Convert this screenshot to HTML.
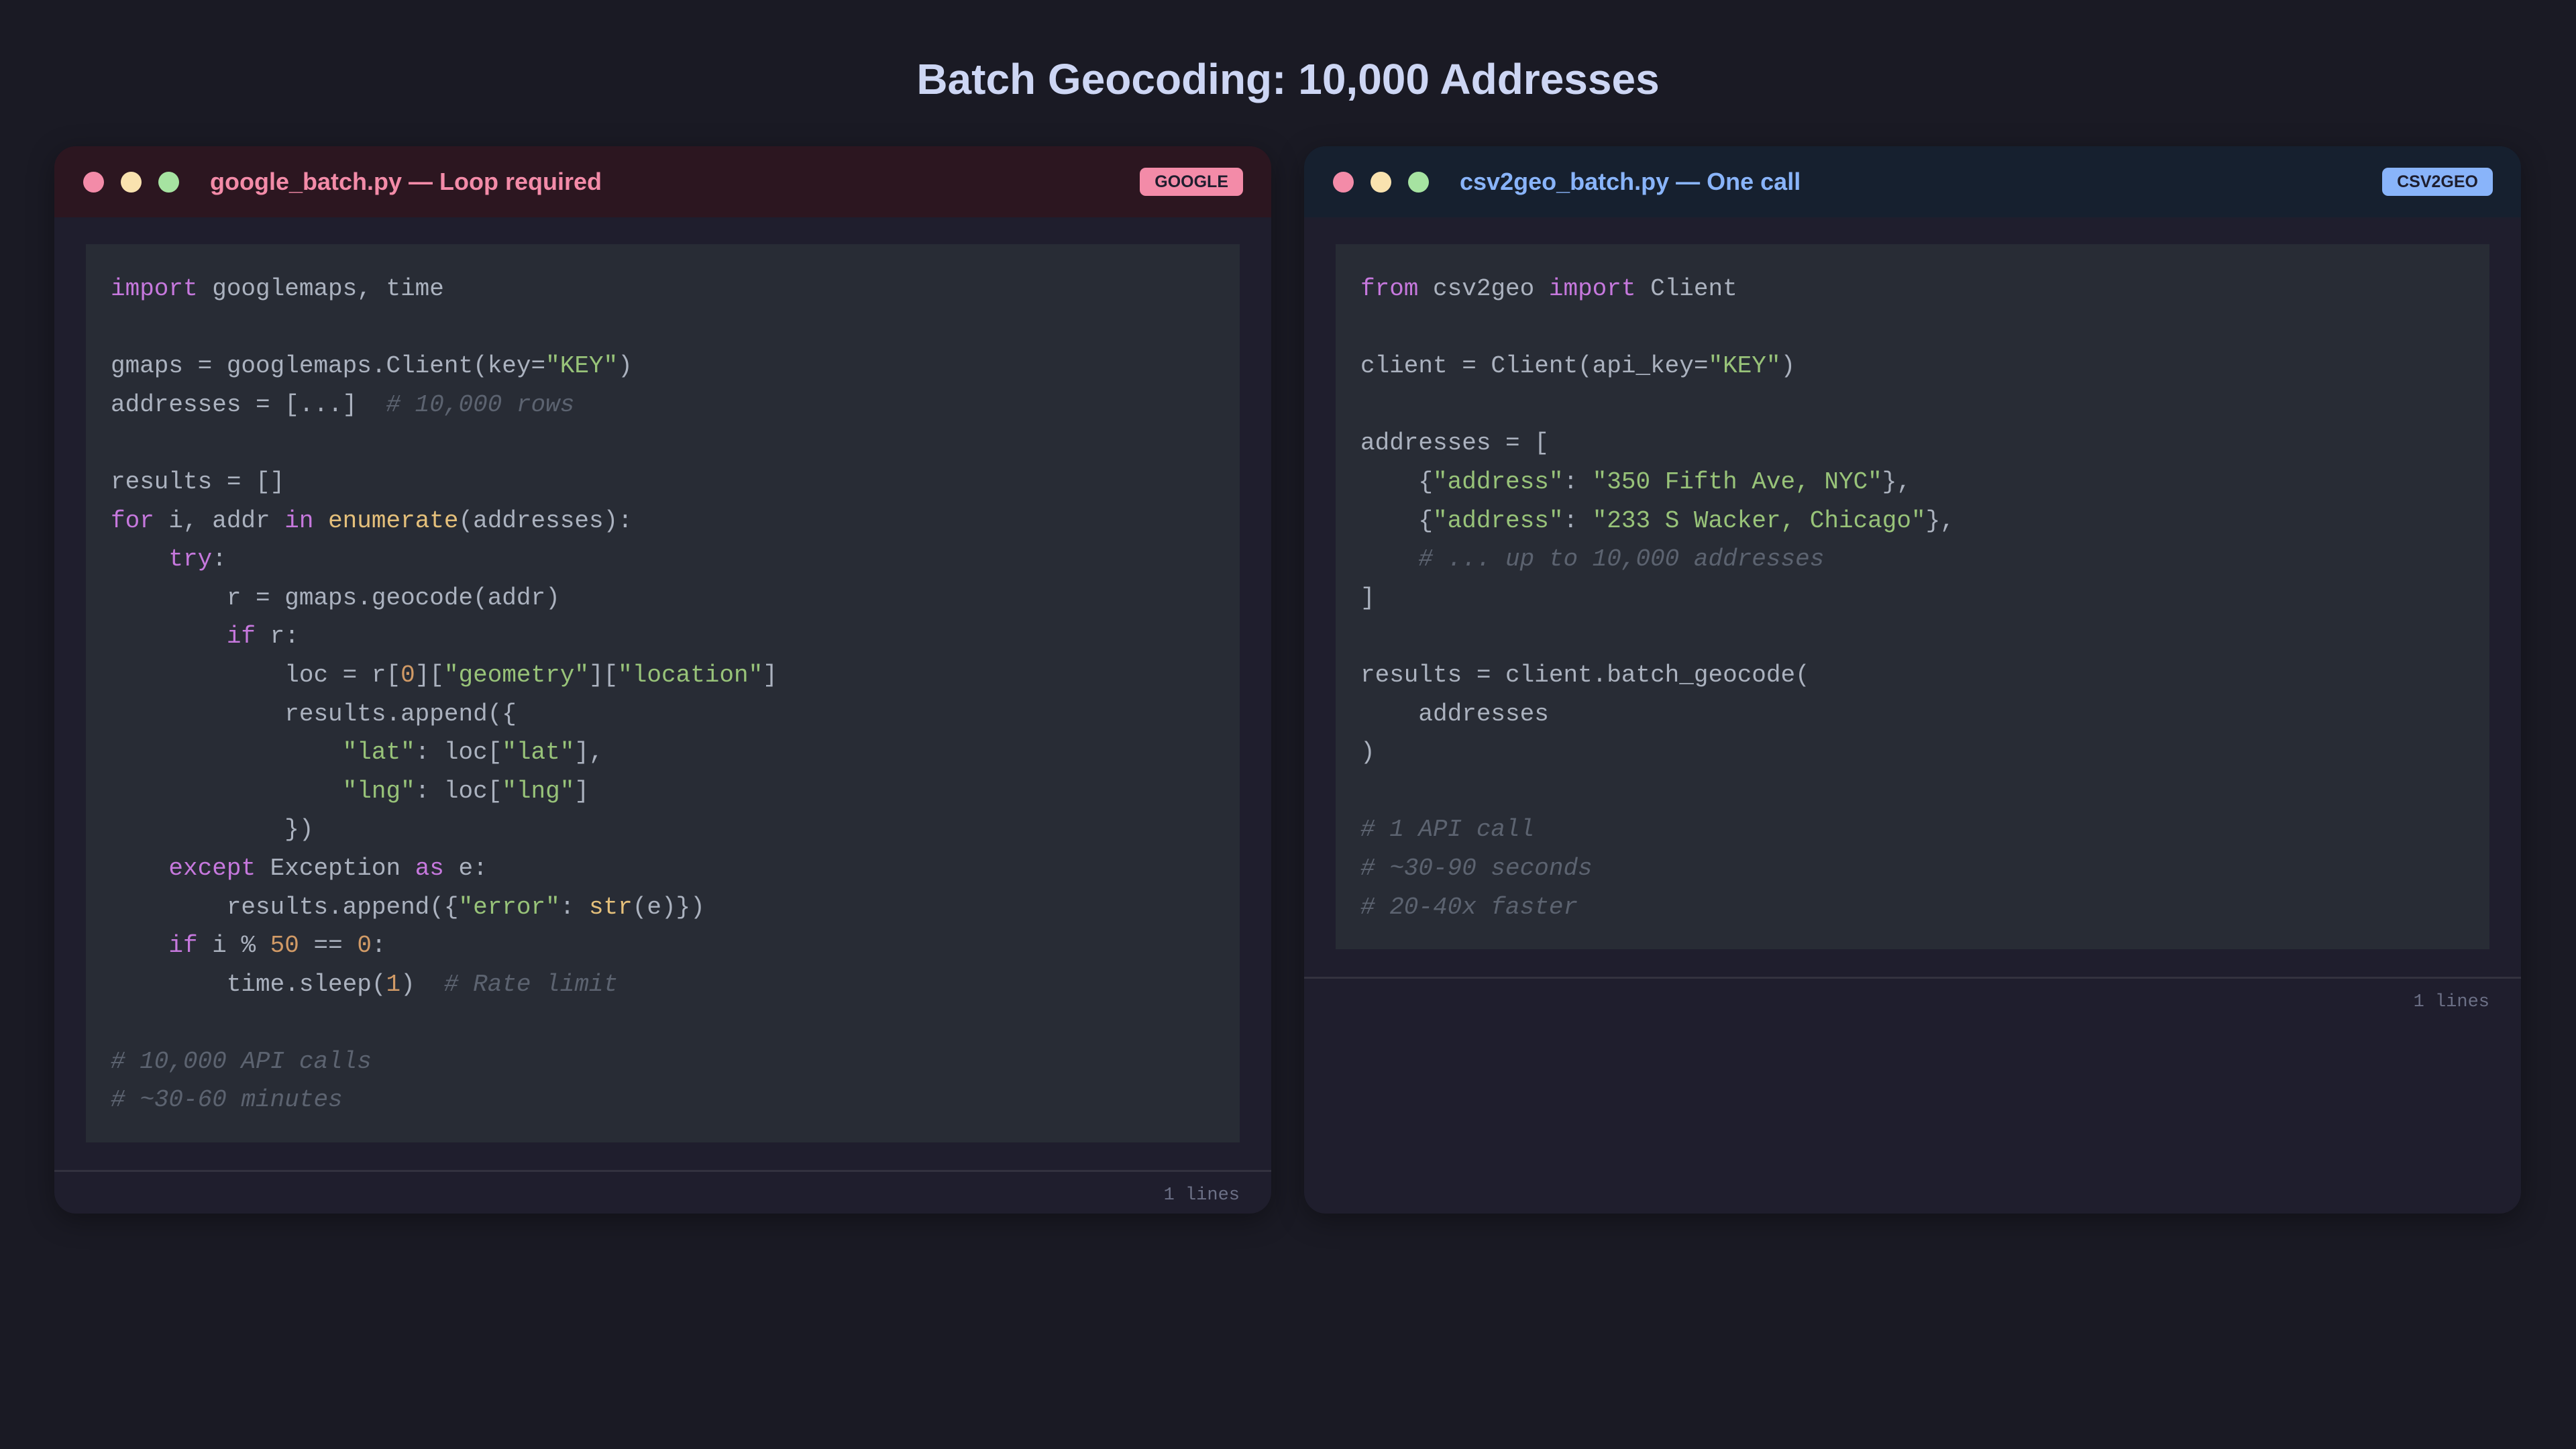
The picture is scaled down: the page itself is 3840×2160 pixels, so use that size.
<!DOCTYPE html>
<html><head><meta charset="utf-8"><style>
*{margin:0;padding:0;box-sizing:border-box}
body{width:3840px;height:2160px;background:#1a1a24;font-family:"Liberation Sans",sans-serif;position:relative;overflow:hidden}
h1{position:absolute;top:78px;left:0;width:3840px;text-align:center;font-size:64px;font-weight:bold;color:#cdd6f4;line-height:80px}
.panel{position:absolute;top:218px;width:1814px;height:1591px;background:#1f1e2d;border-radius:32px;overflow:hidden;box-shadow:0 10px 40px rgba(0,0,0,0.35)}
.hdr{height:106px;position:relative}
.dot{position:absolute;top:38px;width:31px;height:31px;border-radius:50%}
.ttl{position:absolute;left:232px;top:0;line-height:106px;font-size:36px;font-weight:bold}
.badge{position:absolute;top:32px;right:42px;height:42px;line-height:42px;padding:0 22px;border-radius:9px;font-size:25px;font-weight:bold;color:#1e1e2e}
.code{position:absolute;left:47px;top:146px;width:1720px;background:#282c35;padding:38px 37px 34px;font-family:"Liberation Mono",monospace;font-size:36px;line-height:57.6px;color:#abb2bf;white-space:pre}
.sep{position:absolute;left:0;right:0;height:3px;background:#33323f}
.foot{position:absolute;right:47px;font-family:"Liberation Mono",monospace;font-size:27px;color:#6c7086}
.k{color:#c678dd}.s{color:#98c379}.f{color:#e5c07b}.n{color:#d19a66}.c{color:#5c6370;font-style:italic}
</style></head><body>
<h1>Batch Geocoding: 10,000 Addresses</h1>

<div class="panel" style="left:81px">
<div class="hdr" style="background:#2c1620">
<div class="dot" style="left:43px;background:#f38ba8"></div>
<div class="dot" style="left:99px;background:#f9e2af"></div>
<div class="dot" style="left:155px;background:#a6e3a1"></div>
<div class="ttl" style="color:#f38ba8">google_batch.py — Loop required</div>
<div class="badge" style="background:#f38ba8">GOOGLE</div>
</div>
<div class="code"><span class="k">import</span> googlemaps, time

gmaps = googlemaps.Client(key=<span class="s">"KEY"</span>)
addresses = [...]  <span class="c"># 10,000 rows</span>

results = []
<span class="k">for</span> i, addr <span class="k">in</span> <span class="f">enumerate</span>(addresses):
    <span class="k">try</span>:
        r = gmaps.geocode(addr)
        <span class="k">if</span> r:
            loc = r[<span class="n">0</span>][<span class="s">"geometry"</span>][<span class="s">"location"</span>]
            results.append({
                <span class="s">"lat"</span>: loc[<span class="s">"lat"</span>],
                <span class="s">"lng"</span>: loc[<span class="s">"lng"</span>]
            })
    <span class="k">except</span> Exception <span class="k">as</span> e:
        results.append({<span class="s">"error"</span>: <span class="f">str</span>(e)})
    <span class="k">if</span> i % <span class="n">50</span> == <span class="n">0</span>:
        time.sleep(<span class="n">1</span>)  <span class="c"># Rate limit</span>

<span class="c"># 10,000 API calls</span>
<span class="c"># ~30-60 minutes</span></div>
<div class="sep" style="top:1526px"></div>
<div class="foot" style="top:1549px">1 lines</div>
</div>

<div class="panel" style="left:1944px;">
<div class="hdr" style="background:#16202f">
<div class="dot" style="left:43px;background:#f38ba8"></div>
<div class="dot" style="left:99px;background:#f9e2af"></div>
<div class="dot" style="left:155px;background:#a6e3a1"></div>
<div class="ttl" style="color:#89b4fa">csv2geo_batch.py — One call</div>
<div class="badge" style="background:#89b4fa">CSV2GEO</div>
</div>
<div class="code"><span class="k">from</span> csv2geo <span class="k">import</span> Client

client = Client(api_key=<span class="s">"KEY"</span>)

addresses = [
    {<span class="s">"address"</span>: <span class="s">"350 Fifth Ave, NYC"</span>},
    {<span class="s">"address"</span>: <span class="s">"233 S Wacker, Chicago"</span>},
    <span class="c"># ... up to 10,000 addresses</span>
]

results = client.batch_geocode(
    addresses
)

<span class="c"># 1 API call</span>
<span class="c"># ~30-90 seconds</span>
<span class="c"># 20-40x faster</span></div>
<div class="sep" style="top:1238px"></div>
<div class="foot" style="top:1261px">1 lines</div>
</div>
</body></html>
